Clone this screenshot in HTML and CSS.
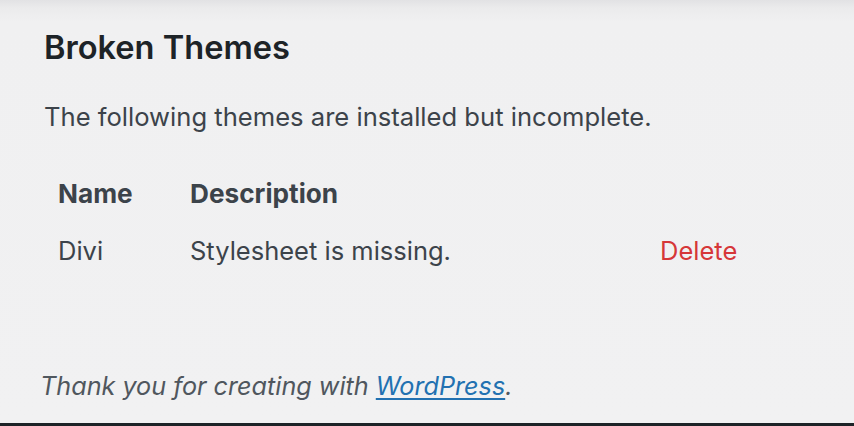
FILE: index.html
```html
<!DOCTYPE html>
<html lang="en">
<head>
<meta charset="utf-8">
<title>Broken Themes</title>
<link rel="stylesheet" href="styles.css">
</head>
<body>
<div class="page">
  <main class="content">
    <h2 class="title">Broken Themes</h2>
    <p class="intro">The following themes are installed but incomplete.</p>
    <table class="broken">
      <thead>
        <tr><th class="col-name">Name</th><th class="col-desc">Description</th><th class="col-act"></th></tr>
      </thead>
      <tbody>
        <tr><td>Divi</td><td>Stylesheet is missing.</td><td><a class="delete" href="#">Delete</a></td></tr>
      </tbody>
    </table>
  </main>
  <footer class="footer">
    <p class="thanks">Thank you for creating with <a href="#">WordPress</a>.</p>
  </footer>
</div>
</body>
</html>
```

FILE: styles.css
```css
html, body {
  margin: 0;
  padding: 0;
}
body {
  background: #f0f0f1;
  font-family: Inter, "Noto Sans", sans-serif;
  color: #3c434a;
}
.page {
  height: 426px;
  box-sizing: border-box;
  display: flex;
  flex-direction: column;
  background: linear-gradient(to bottom, #e2e2e4 0px, #ebebec 8px, #f0f0f1 22px, #f1f1f2 100%);
  border-bottom: 3px solid #1d2327;
  overflow: hidden;
}
.content {
  padding: 27px 0 0 44px;
  flex: 1;
}
.title {
  margin: 0;
  font-size: 32.6px;
  line-height: 40px;
  font-weight: 600;
  color: #1d2327;
}
.intro {
  margin: 32px 0 0;
  font-size: 25.6px;
  line-height: 36px;
  color: #3c434a;
}
.broken {
  margin-top: 30px;
  border-collapse: collapse;
  font-size: 25.5px;
  line-height: 37px;
}
.broken th, .broken td {
  padding: 10px 14px;
  text-align: left;
  vertical-align: top;
}
.broken th {
  font-size: 26.2px;
  font-weight: 700;
  color: #3c434a;
}
.col-name { width: 104px; }
.col-desc { width: 442px; }
.delete {
  color: #d63638;
  text-decoration: none;
}
.footer {
  padding: 0 0 19px 40px;
}
.thanks {
  margin: 0;
  font-size: 25.2px;
  line-height: 36px;
  font-style: italic;
  color: #50575e;
}
.thanks a {
  color: #2271b1;
  text-decoration: underline;
  text-underline-offset: 3px;
}
```
